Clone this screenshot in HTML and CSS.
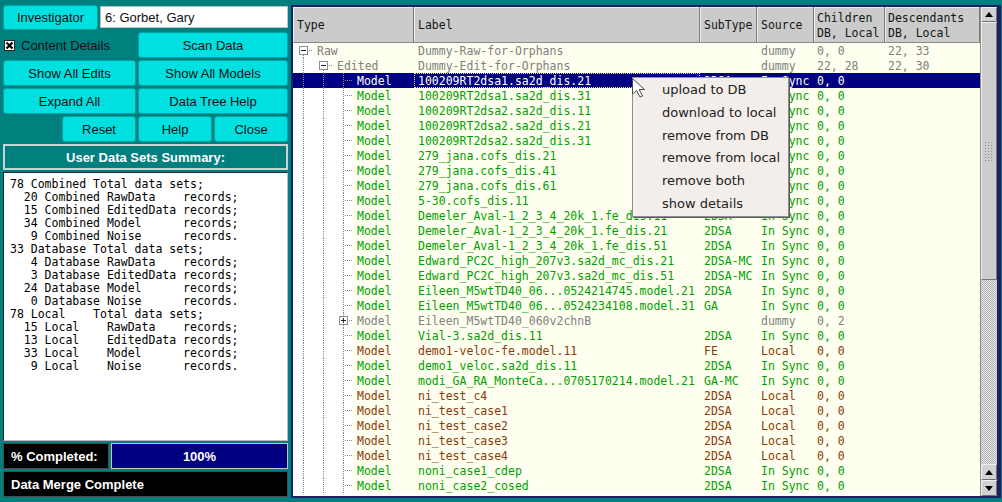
FILE: index.html
```html
<!DOCTYPE html>
<html>
<head>
<meta charset="utf-8">
<title>Manage Models</title>
<link rel="stylesheet" href="styles.css">
</head>
<body>
<div class="app">
  <div class="left">
    <div class="r1">
      <button class="btn inv">Investigator</button>
      <div class="field">6: Gorbet, Gary</div>
    </div>
    <div class="grid">
      <div class="chk"><span class="cbox"><svg width="9" height="9" viewBox="0 0 9 9"><path d="M1.5 1.5 L7.5 7.5 M7.5 1.5 L1.5 7.5" stroke="#000" stroke-width="2.2"/></svg></span>Content Details</div>
      <button class="btn">Scan Data</button>
      <button class="btn">Show All Edits</button>
      <button class="btn">Show All Models</button>
      <button class="btn">Expand All</button>
      <button class="btn">Data Tree Help</button>
    </div>
    <div class="r5">
      <button class="btn sm">Reset</button>
      <button class="btn sm">Help</button>
      <button class="btn sm">Close</button>
    </div>
    <div class="banner">User Data Sets Summary:</div>
    <pre class="summary">78 Combined Total data sets;
  20 Combined RawData    records;
  15 Combined EditedData records;
  34 Combined Model      records;
   9 Combined Noise      records.
33 Database Total data sets;
   4 Database RawData    records;
   3 Database EditedData records;
  24 Database Model      records;
   0 Database Noise      records.
78 Local    Total data sets;
  15 Local    RawData    records;
  13 Local    EditedData records;
  33 Local    Model      records;
   9 Local    Noise      records.</pre>
    <div class="prog">
      <div class="plabel">% Completed:</div>
      <div class="pbar">100%</div>
    </div>
    <div class="status">Data Merge Complete</div>
  </div>

  <div class="right">
    <div class="tree">
      <div class="hdr">
        <div>Type</div>
        <div>Label</div>
        <div>SubType</div>
        <div>Source</div>
        <div class="n">Children<br>DB, Local</div>
        <div class="n">Descendants<br>DB, Local</div>
      </div>
      <div class="rows">
        <div class="row g"><div class="c type"><i class="b first"><b class="tg minus"></b></i><span class="t">Raw</span></div><div class="c">Dummy-Raw-for-Orphans</div><div class="c"></div><div class="c">dummy</div><div class="c n">0, 0</div><div class="c n">22, 33</div></div>
        <div class="row g"><div class="c type"><i class="b v"></i><i class="b first"><b class="tg minus"></b></i><span class="t">Edited</span></div><div class="c">Dummy-Edit-for-Orphans</div><div class="c"></div><div class="c">dummy</div><div class="c n">22, 28</div><div class="c n">22, 30</div></div>
        <div class="row sel"><div class="c type"><i class="b v"></i><i class="b v"></i><i class="b tee"></i><span class="t">Model</span></div><div class="c focus">100209RT2dsa1.sa2d_dis.21</div><div class="c">2DSA</div><div class="c">In Sync</div><div class="c n">0, 0</div><div class="c n"></div></div>
        <div class="row gr"><div class="c type"><i class="b v"></i><i class="b v"></i><i class="b tee"></i><span class="t">Model</span></div><div class="c">100209RT2dsa1.sa2d_dis.31</div><div class="c">2DSA</div><div class="c">In Sync</div><div class="c n">0, 0</div><div class="c n"></div></div>
        <div class="row gr"><div class="c type"><i class="b v"></i><i class="b v"></i><i class="b tee"></i><span class="t">Model</span></div><div class="c">100209RT2dsa2.sa2d_dis.11</div><div class="c">2DSA</div><div class="c">In Sync</div><div class="c n">0, 0</div><div class="c n"></div></div>
        <div class="row gr"><div class="c type"><i class="b v"></i><i class="b v"></i><i class="b tee"></i><span class="t">Model</span></div><div class="c">100209RT2dsa2.sa2d_dis.21</div><div class="c">2DSA</div><div class="c">In Sync</div><div class="c n">0, 0</div><div class="c n"></div></div>
        <div class="row gr"><div class="c type"><i class="b v"></i><i class="b v"></i><i class="b tee"></i><span class="t">Model</span></div><div class="c">100209RT2dsa2.sa2d_dis.31</div><div class="c">2DSA</div><div class="c">In Sync</div><div class="c n">0, 0</div><div class="c n"></div></div>
        <div class="row gr"><div class="c type"><i class="b v"></i><i class="b v"></i><i class="b tee"></i><span class="t">Model</span></div><div class="c">279_jana.cofs_dis.21</div><div class="c">COFS</div><div class="c">In Sync</div><div class="c n">0, 0</div><div class="c n"></div></div>
        <div class="row gr"><div class="c type"><i class="b v"></i><i class="b v"></i><i class="b tee"></i><span class="t">Model</span></div><div class="c">279_jana.cofs_dis.41</div><div class="c">COFS</div><div class="c">In Sync</div><div class="c n">0, 0</div><div class="c n"></div></div>
        <div class="row gr"><div class="c type"><i class="b v"></i><i class="b v"></i><i class="b tee"></i><span class="t">Model</span></div><div class="c">279_jana.cofs_dis.61</div><div class="c">COFS</div><div class="c">In Sync</div><div class="c n">0, 0</div><div class="c n"></div></div>
        <div class="row gr"><div class="c type"><i class="b v"></i><i class="b v"></i><i class="b tee"></i><span class="t">Model</span></div><div class="c">5-30.cofs_dis.11</div><div class="c">COFS</div><div class="c">In Sync</div><div class="c n">0, 0</div><div class="c n"></div></div>
        <div class="row gr"><div class="c type"><i class="b v"></i><i class="b v"></i><i class="b tee"></i><span class="t">Model</span></div><div class="c">Demeler_Aval-1_2_3_4_20k_1.fe_dis.11</div><div class="c">2DSA</div><div class="c">In Sync</div><div class="c n">0, 0</div><div class="c n"></div></div>
        <div class="row gr"><div class="c type"><i class="b v"></i><i class="b v"></i><i class="b tee"></i><span class="t">Model</span></div><div class="c">Demeler_Aval-1_2_3_4_20k_1.fe_dis.21</div><div class="c">2DSA</div><div class="c">In Sync</div><div class="c n">0, 0</div><div class="c n"></div></div>
        <div class="row gr"><div class="c type"><i class="b v"></i><i class="b v"></i><i class="b tee"></i><span class="t">Model</span></div><div class="c">Demeler_Aval-1_2_3_4_20k_1.fe_dis.51</div><div class="c">2DSA</div><div class="c">In Sync</div><div class="c n">0, 0</div><div class="c n"></div></div>
        <div class="row gr"><div class="c type"><i class="b v"></i><i class="b v"></i><i class="b tee"></i><span class="t">Model</span></div><div class="c">Edward_PC2C_high_207v3.sa2d_mc_dis.21</div><div class="c">2DSA-MC</div><div class="c">In Sync</div><div class="c n">0, 0</div><div class="c n"></div></div>
        <div class="row gr"><div class="c type"><i class="b v"></i><i class="b v"></i><i class="b tee"></i><span class="t">Model</span></div><div class="c">Edward_PC2C_high_207v3.sa2d_mc_dis.51</div><div class="c">2DSA-MC</div><div class="c">In Sync</div><div class="c n">0, 0</div><div class="c n"></div></div>
        <div class="row gr"><div class="c type"><i class="b v"></i><i class="b v"></i><i class="b tee"></i><span class="t">Model</span></div><div class="c">Eileen_M5wtTD40_06...0524214745.model.21</div><div class="c">2DSA</div><div class="c">In Sync</div><div class="c n">0, 0</div><div class="c n"></div></div>
        <div class="row gr"><div class="c type"><i class="b v"></i><i class="b v"></i><i class="b tee"></i><span class="t">Model</span></div><div class="c">Eileen_M5wtTD40_06...0524234108.model.31</div><div class="c">GA</div><div class="c">In Sync</div><div class="c n">0, 0</div><div class="c n"></div></div>
        <div class="row g"><div class="c type"><i class="b v"></i><i class="b v"></i><i class="b tee"><b class="tg plus"></b></i><span class="t">Model</span></div><div class="c">Eileen_M5wtTD40_060v2chnB</div><div class="c"></div><div class="c">dummy</div><div class="c n">0, 2</div><div class="c n"></div></div>
        <div class="row gr"><div class="c type"><i class="b v"></i><i class="b v"></i><i class="b tee"></i><span class="t">Model</span></div><div class="c">Vial-3.sa2d_dis.11</div><div class="c">2DSA</div><div class="c">In Sync</div><div class="c n">0, 0</div><div class="c n"></div></div>
        <div class="row brn"><div class="c type"><i class="b v"></i><i class="b v"></i><i class="b tee"></i><span class="t">Model</span></div><div class="c">demo1-veloc-fe.model.11</div><div class="c">FE</div><div class="c">Local</div><div class="c n">0, 0</div><div class="c n"></div></div>
        <div class="row gr"><div class="c type"><i class="b v"></i><i class="b v"></i><i class="b tee"></i><span class="t">Model</span></div><div class="c">demo1_veloc.sa2d_dis.11</div><div class="c">2DSA</div><div class="c">In Sync</div><div class="c n">0, 0</div><div class="c n"></div></div>
        <div class="row gr"><div class="c type"><i class="b v"></i><i class="b v"></i><i class="b tee"></i><span class="t">Model</span></div><div class="c">modi_GA_RA_MonteCa...0705170214.model.21</div><div class="c">GA-MC</div><div class="c">In Sync</div><div class="c n">0, 0</div><div class="c n"></div></div>
        <div class="row brn"><div class="c type"><i class="b v"></i><i class="b v"></i><i class="b tee"></i><span class="t">Model</span></div><div class="c">ni_test_c4</div><div class="c">2DSA</div><div class="c">Local</div><div class="c n">0, 0</div><div class="c n"></div></div>
        <div class="row brn"><div class="c type"><i class="b v"></i><i class="b v"></i><i class="b tee"></i><span class="t">Model</span></div><div class="c">ni_test_case1</div><div class="c">2DSA</div><div class="c">Local</div><div class="c n">0, 0</div><div class="c n"></div></div>
        <div class="row brn"><div class="c type"><i class="b v"></i><i class="b v"></i><i class="b tee"></i><span class="t">Model</span></div><div class="c">ni_test_case2</div><div class="c">2DSA</div><div class="c">Local</div><div class="c n">0, 0</div><div class="c n"></div></div>
        <div class="row brn"><div class="c type"><i class="b v"></i><i class="b v"></i><i class="b tee"></i><span class="t">Model</span></div><div class="c">ni_test_case3</div><div class="c">2DSA</div><div class="c">Local</div><div class="c n">0, 0</div><div class="c n"></div></div>
        <div class="row brn"><div class="c type"><i class="b v"></i><i class="b v"></i><i class="b tee"></i><span class="t">Model</span></div><div class="c">ni_test_case4</div><div class="c">2DSA</div><div class="c">Local</div><div class="c n">0, 0</div><div class="c n"></div></div>
        <div class="row gr"><div class="c type"><i class="b v"></i><i class="b v"></i><i class="b tee"></i><span class="t">Model</span></div><div class="c">noni_case1_cdep</div><div class="c">2DSA</div><div class="c">In Sync</div><div class="c n">0, 0</div><div class="c n"></div></div>
        <div class="row gr"><div class="c type"><i class="b v"></i><i class="b v"></i><i class="b tee"></i><span class="t">Model</span></div><div class="c">noni_case2_cosed</div><div class="c">2DSA</div><div class="c">In Sync</div><div class="c n">0, 0</div><div class="c n"></div></div>
      </div>
    </div>
    <div class="sbar">
      <div class="sb-btn top"><svg width="8" height="5" viewBox="0 0 8 5"><path d="M0 5 L4 0 L8 5 Z" fill="#000"/></svg></div>
      <div class="thumb"><span class="grip"></span></div>
      <div class="track"></div>
      <div class="sb-btn"><svg width="8" height="5" viewBox="0 0 8 5"><path d="M0 5 L4 0 L8 5 Z" fill="#000"/></svg></div>
      <div class="sb-btn"><svg width="8" height="5" viewBox="0 0 8 5"><path d="M0 0 L8 0 L4 5 Z" fill="#000"/></svg></div>
    </div>

    <div class="menu">
      <div>upload to DB</div>
      <div>download to local</div>
      <div>remove from DB</div>
      <div>remove from local</div>
      <div>remove both</div>
      <div>show details</div>
    </div>
    <svg class="cursor" width="14" height="20" viewBox="0 0 14 20"><path d="M0.5 0.5 L0.5 16 L4.5 12.5 L8 19 L10.5 18 L7.2 11.5 L12.5 11.5 Z" fill="#fff" stroke="#4a4a4a" stroke-width="1" stroke-linejoin="round"/></svg>
  </div>
</div>
</body>
</html>
```

FILE: styles.css
```css
* { box-sizing: border-box; }
html, body { margin: 0; padding: 0; }
body {
  width: 1002px;
  height: 502px;
  overflow: hidden;
  background: #007f7f;
  font-family: "Liberation Sans", Arial, sans-serif;
  font-size: 13px;
  color: #111;
}
.app {
  display: flex;
  gap: 3px;
  padding: 5px 1px 0 3px;
  height: 502px;
}

/* ---------- left column ---------- */
.left {
  width: 285px;
  flex: none;
  display: flex;
  flex-direction: column;
  gap: 2px;
}
.r1 {
  display: flex;
  gap: 2px;
  height: 25px;
  align-items: flex-start;
}
.btn {
  font: 13px "Liberation Sans", Arial, sans-serif;
  color: #111;
  background: #00e0e0;
  border: 1px solid #00a2a2;
  border-radius: 3px;
  padding: 0;
  height: 26px;
  display: flex;
  align-items: center;
  justify-content: center;
}
.inv { width: 95px; height: 25px; flex: none; }
.field {
  width: 188px;
  height: 22px;
  margin-top: 1px;
  background: #fff;
  border: 1px solid #b8c4c4;
  padding-left: 4px;
  display: flex;
  align-items: center;
  color: #111;
}
.grid {
  display: grid;
  grid-template-columns: 133px 150px;
  grid-auto-rows: 26px;
  gap: 2px;
}
.chk {
  display: flex;
  align-items: center;
  gap: 6px;
  padding-left: 1px;
  color: #111;
}
.cbox {
  width: 11px;
  height: 11px;
  background: #fff;
  border: 1px solid #222;
  display: flex;
  align-items: center;
  justify-content: center;
}
.cbox svg { display: block; }
.r5 {
  display: flex;
  justify-content: flex-end;
  gap: 2px;
  height: 26px;
}
.sm { width: 74px; }
.banner {
  height: 26px;
  border: 2px solid #c9d3d3;
  background: #007f7f;
  color: #fff;
  font-weight: bold;
  display: flex;
  align-items: center;
  justify-content: center;
}
.summary {
  height: 269px;
  margin: 0;
  background: #fff;
  border: 1px solid;
  border-color: #2a2a2a #bcbcbc #bcbcbc #2a2a2a;
  padding: 5px 6px 4px;
  font: 11.5px/13px "DejaVu Sans Mono", monospace;
  color: #000;
  white-space: pre;
  overflow: hidden;
}
.prog {
  display: flex;
  gap: 2px;
  height: 26px;
}
.plabel {
  width: 106px;
  flex: none;
  background: #000;
  border: 1px solid #4a4a4a;
  color: #fff;
  font-weight: bold;
  display: flex;
  align-items: center;
  padding-left: 7px;
}
.pbar {
  flex: 1;
  background: #000080;
  border: 1px solid #c4c4c4;
  color: #fff;
  font-weight: bold;
  display: flex;
  align-items: center;
  justify-content: center;
}
.status {
  height: 26px;
  background: #000;
  border: 1px solid #4a4a4a;
  color: #fff;
  font-weight: bold;
  display: flex;
  align-items: center;
  padding-left: 7px;
}

/* ---------- right panel ---------- */
.right {
  position: relative;
  width: 710px;
  height: 493px;
  flex: none;
  border: 2px solid #1f1f68;
  border-right-width: 4px;
  display: flex;
  background: #fff;
}
.tree {
  width: 687px;
  flex: none;
  display: flex;
  flex-direction: column;
  overflow: hidden;
}
.hdr {
  display: grid;
  grid-template-columns: 121px 286px 57px 57px 71px 95px;
  height: 36px;
  flex: none;
  background: #cbcbcb;
}
.hdr > div {
  border-right: 1px solid #7c7c7c;
  border-bottom: 1px solid #8a8a8a;
  box-shadow: inset 1px 1px 0 #ededed;
  padding: 2px 0 0 4px;
  display: flex;
  align-items: center;
  font: 11.5px/15px "DejaVu Sans Mono", monospace;
  color: #151515;
}
.hdr > div.n { padding-left: 3px; }
.rows {
  flex: 1;
  overflow: hidden;
}
.row {
  display: grid;
  grid-template-columns: 121px 286px 57px 57px 71px 95px;
  height: 15px;
  font: 11.5px/17px "DejaVu Sans Mono", monospace;
  background: #fffff0;
  white-space: nowrap;
}
.c {
  overflow: hidden;
  height: 15px;
  padding-left: 4px;
}
.c.n { padding-left: 3px; }
.c.type {
  display: flex;
  padding-left: 0;
  background: #fff;
}
.t {
  flex: 1;
  padding-left: 4px;
  background: #fffff0;
}
.g { color: #808080; }
.gr { color: #00a000; }
.brn { color: #8a3a06; }
.row.sel, .row.sel .type, .row.sel .t {
  background: #000080;
  color: #fff;
}
.focus {
  outline: 1px dotted #e8e890;
  outline-offset: -1px;
}

/* tree branches */
.b {
  display: flex;
  width: 20px;
  height: 15px;
  flex: none;
  background-repeat: no-repeat;
}
.b.v {
  background-image: repeating-linear-gradient(to bottom, #8a8a8a 0 1px, transparent 1px 2px);
  background-position: 10px 0;
  background-size: 1px 15px;
}
.b.tee {
  background-image:
    repeating-linear-gradient(to bottom, #8a8a8a 0 1px, transparent 1px 2px),
    repeating-linear-gradient(to right, #8a8a8a 0 1px, transparent 1px 2px);
  background-position: 10px 0, 12px 7px;
  background-size: 1px 15px, 8px 1px;
}
.b.first {
  background-image:
    repeating-linear-gradient(to bottom, #8a8a8a 0 1px, transparent 1px 2px),
    repeating-linear-gradient(to right, #8a8a8a 0 1px, transparent 1px 2px);
  background-position: 10px 8px, 12px 7px;
  background-size: 1px 7px, 8px 1px;
}
.tg {
  width: 9px;
  height: 9px;
  margin: 3px 0 0 6px;
  border: 1px solid #8c8c8c;
  background-color: #fff;
  background-repeat: no-repeat;
}
.tg.minus {
  background-image: linear-gradient(#222, #222);
  background-position: center;
  background-size: 5px 1px;
}
.tg.plus {
  background-image: linear-gradient(#222, #222), linear-gradient(#222, #222);
  background-position: center, center;
  background-size: 5px 1px, 1px 5px;
}

/* scrollbar */
.sbar {
  width: 17px;
  flex: none;
  display: flex;
  flex-direction: column;
  background: #c8c8c8;
  border-left: 1px solid #8e8e8e;
}
.sb-btn {
  height: 16px;
  flex: none;
  background: #d2d2d2;
  border: 1px solid;
  border-color: #f2f2f2 #6e6e6e #6e6e6e #f2f2f2;
  border-radius: 2px;
  display: flex;
  align-items: center;
  justify-content: center;
}
.sb-btn.top { height: 15px; }
.sb-btn svg { display: block; }
.thumb {
  height: 258px;
  flex: none;
  background: #cdcdcd;
  border: 1px solid;
  border-color: #f0f0f0 #777 #777 #f0f0f0;
  display: flex;
  align-items: center;
  justify-content: center;
}
.grip {
  width: 10px;
  height: 20px;
  background-image: radial-gradient(circle, #8a8a8a 0.8px, transparent 1px);
  background-size: 3px 3px;
}
.track {
  flex: 1;
  background: repeating-conic-gradient(#b4b4b4 0 25%, #e6e6e6 0 50%) 0 0 / 2px 2px;
}

/* context menu + pointer (overlays) */
.menu {
  position: absolute;
  left: 339px;
  top: 70px;
  width: 157px;
  height: 140px;
  background: #f4eeea;
  border: 1px solid #8e8e8e;
  box-shadow: 1px 1px 0 #5a5a5a;
  padding: 1px 0 0 29px;
  font: 13px "DejaVu Sans", sans-serif;
  color: #222;
}
.menu div {
  height: 22.8px;
  line-height: 22.8px;
  white-space: nowrap;
}
.cursor {
  position: absolute;
  left: 339px;
  top: 71px;
  display: block;
}
```
